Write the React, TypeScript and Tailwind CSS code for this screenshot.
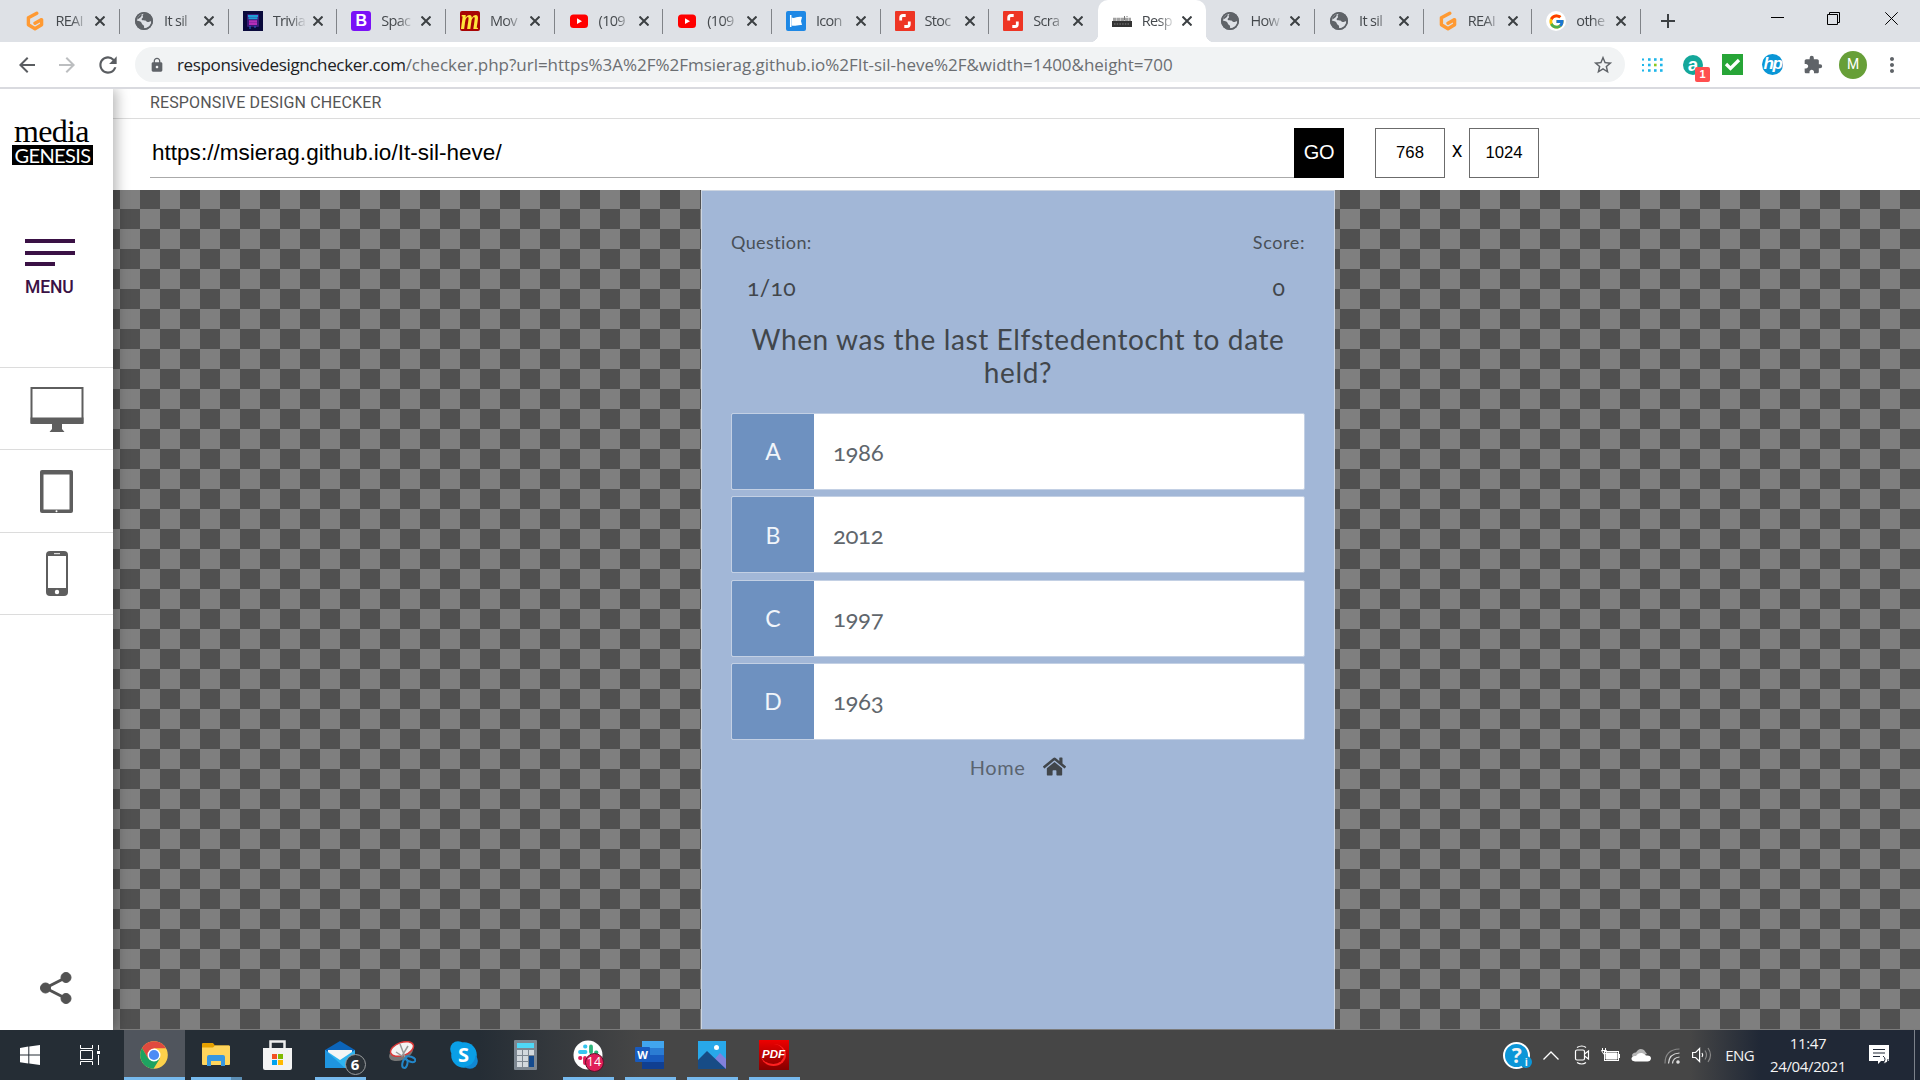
import React from "react";
import { FcGoogle } from "react-icons/fc";
import { FaHome } from "react-icons/fa";
import { MdLock, MdStarBorder, MdExtension, MdMoreVert, MdArrowBack, MdArrowForward, MdRefresh } from "react-icons/md";

const Gitpod = () => (
  <svg viewBox="0 0 20 20" className="h-5 w-5" fill="none" stroke="#ff9a33" strokeWidth="3.400" strokeLinejoin="round" strokeLinecap="round">
    <path d="M11.800 2.200 3.400 6.800v7l6.600 4 6.600-4V8.600L10 12.200" />
  </svg>
);
const Globe = () => (
  <svg viewBox="0 0 20 20" className="h-5 w-5">
    <circle cx="10" cy="10" r="9" fill="#5f6368" />
    <path d="M10.500 2.500c-2 .8-2.200 2-1.600 3 .8 1.300-1.500 1.400-1.200 3 .4 1.500 3.800.2 4.600 1.800.6 1.300 2.300.7 3.500.2 1-.4 1.700-.2 1.600.8-.6 3.400-3.400 5.900-6.600 6.200-1 0-.6-1.600-.8-2.500-.4-1.400-2-1-2.200-2.500-.1-1.400-2.200-2.600-5-3C2.700 5.500 6.200 2 10.500 2.500z" fill="#dee1e6" />
    <path d="M3 8.500C3.500 5.800 5.600 3.600 8.400 3c-1 1-.6 2.400-1.800 3.300C5.400 7 4.500 8.400 3 8.500z" fill="#5f6368" />
    <circle cx="10" cy="10" r="8.200" fill="none" stroke="#5f6368" strokeWidth="1.700" />
  </svg>
);
const Trivia = () => (
  <svg viewBox="0 0 20 20" className="h-5 w-5">
    <rect width="20" height="20" fill="#0a0a3c" />
    <rect x="4" y="3" width="12" height="13" rx="1" fill="#3a1a78" />
    <path d="M5 5h10M5.500 7.300h9" stroke="#1f9fd8" strokeWidth="2" />
    <path d="M6 10.300h8M6 12.800h8" stroke="#b52fb8" strokeWidth="2.300" />
    <path d="M7 15v3M12 15v2" stroke="#2b6fd0" />
  </svg>
);
const Bootstrap = () => (
  <div className="grid h-5 w-5 place-items-center rounded-[3px] bg-[#7a11f7] font-['Liberation_Sans'] text-[16px] leading-none font-bold text-white">B</div>
);
const Movie = () => (
  <div className="grid h-5 w-5 place-items-center rounded-[2px] bg-[#a80505] font-['Liberation_Serif'] font-bold text-[#ffe63b] italic">
    <span className="-mt-[5px] scale-y-125 text-[24px] leading-none">m</span>
  </div>
);
const YouTube = () => (
  <svg viewBox="0 0 20 20" className="h-5 w-5">
    <rect x="1" y="3.500" width="18" height="13.500" rx="3.500" fill="#f00" />
    <path d="M8 7.300v5.800l5-2.900z" fill="#fff" />
  </svg>
);
const IconFlag = () => (
  <svg viewBox="0 0 20 20" className="h-5 w-5">
    <rect width="20" height="20" rx="2" fill="#1e88e5" />
    <path d="M4.700 4v12" stroke="#fff" strokeWidth="1.500" />
    <path d="M5.500 6.500c3 1.500 5.500-1.500 10.500-.5l-1 4 1 4c-4.500-.5-7 1.700-10.500.5z" fill="#fff" />
  </svg>
);
const Shutterstock = () => (
  <svg viewBox="0 0 20 20" className="h-5 w-5">
    <rect width="20" height="20" rx="1" fill="#ee3524" />
    <path d="M5.700 9.500V6.800c0-1.600 1-2.300 2.300-2.300h2.700M14.300 10.500v2.700c0 1.600-1 2.300-2.300 2.300H9.300" fill="none" stroke="#fff" strokeWidth="2.800" />
  </svg>
);
const MediaTiny = () => (
  <svg viewBox="0 0 20 20" className="h-5 w-5">
    <path d="M1 8.500h18" stroke="#a2a2a2" strokeWidth="3.500" strokeDasharray="3.500 .4" />
    <path d="M12.500 5v4M15 5v1" stroke="#777" />
    <rect y="10" width="20" height="6" fill="#333" />
    <path d="M2 13h16" stroke="#5a5a5a" strokeWidth="2" strokeDasharray="1.500 1.200" />
  </svg>
);
const Google = () => (
  <div className="grid h-5 w-5 place-items-center rounded-full bg-white"><FcGoogle className="h-[17px] w-[17px]" /></div>
);

const tabs: { icon: React.FC; text: string; active?: boolean; line?: boolean }[] = [
  { icon: Gitpod, text: "REAI", line: true },
  { icon: Globe, text: "It sil", line: true },
  { icon: Trivia, text: "Trivia", line: true },
  { icon: Bootstrap, text: "Spac", line: true },
  { icon: Movie, text: "Mov", line: true },
  { icon: YouTube, text: "(109", line: true },
  { icon: YouTube, text: "(109", line: true },
  { icon: IconFlag, text: "Icon", line: true },
  { icon: Shutterstock, text: "Stoc", line: true },
  { icon: Shutterstock, text: "Scra" },
  { icon: MediaTiny, text: "Resp", active: true },
  { icon: Globe, text: "How", line: true },
  { icon: Globe, text: "It sil", line: true },
  { icon: Gitpod, text: "REAI", line: true },
  { icon: Google, text: "othe", line: true },
];

function TabStrip() {
  return (
    <div className="flex h-[42px] shrink-0 bg-[#dee1e6] pl-[11.4px]">
      {tabs.map((t, i) => {
        const Icon = t.icon;
        return (
          <div key={i} className={t.active ? "relative flex w-[108.65px] shrink-0 items-center rounded-t-[10px] bg-white pl-[14px]" : "relative flex w-[108.65px] shrink-0 items-center pl-[14px]"}>
            {t.active && (
              <>
                <span className="absolute bottom-0 -left-[8px] h-2 w-2 bg-[radial-gradient(circle_at_0_0,#dee1e6_8px,#fff_8.5px)]" />
                <span className="absolute -right-[8px] bottom-0 h-2 w-2 bg-[radial-gradient(circle_at_100%_0,#dee1e6_8px,#fff_8.5px)]" />
              </>
            )}
            <div className="grid h-[22px] w-5 place-items-center"><Icon /></div>
            <div className="ml-[10px] w-[32px] [mask-image:linear-gradient(90deg,#000_50%,rgba(0,0,0,0.15)_97%)] font-['Open_Sans',sans-serif] text-[14.5px] leading-5 tracking-[-0.7px] whitespace-nowrap text-[#45494d]">{t.text}</div>
            <svg viewBox="0 0 10 10" className="ml-[8px] h-[10px] w-[10px]" stroke="#3c4043" strokeWidth="2"><path d="M.5.5l9 9M9.500.5l-9 9" /></svg>
            {t.line && <span className="absolute top-[9px] right-0 h-[25px] w-px bg-[#808388]" />}
          </div>
        );
      })}
      <svg viewBox="0 0 14 14" className="mt-[14px] ml-[20px] h-[14px] w-[14px]" stroke="#3c4043" strokeWidth="2"><path d="M7 0v14M0 7h14" /></svg>
      <div className="mr-[22px] ml-auto flex items-start gap-[43px] pt-[12px]">
        <svg viewBox="0 0 13 13" className="h-[13px] w-[13px]" stroke="#000"><path d="M0 5.500h13" /></svg>
        <svg viewBox="0 0 13 13" className="h-[13px] w-[13px]" stroke="#000" fill="none"><path d="M.5 2.500h10v10H.5zM2.500 2.500v-2h10v10h-2" /></svg>
        <svg viewBox="0 0 13 13" className="ml-[2px] h-[13px] w-[13px]" stroke="#000"><path d="M.3.3l12.400 12.400M12.700.3.3 12.700" /></svg>
      </div>
    </div>
  );
}

const dotRows = [4.5, 10, 15.5];
function Toolbar() {
  return (
    <div className="flex h-[47px] shrink-0 items-center border-b-2 border-[#d9dadf] bg-white">
      <MdArrowBack className="ml-[15px] h-6 w-6 text-[#5a5d61]" />
      <MdArrowForward className="ml-[16px] h-6 w-6 text-[#bcbec0]" />
      <MdRefresh className="ml-[16px] h-[26px] w-[26px] text-[#5a5d61]" />
      <div className="ml-[14px] flex h-[35px] w-[1490px] items-center rounded-full bg-[#f1f3f4] pr-[11px] pl-[14px] font-['Open_Sans',sans-serif] text-[17px]">
        <MdLock className="h-4 w-4 text-[#5f6368]" />
        <div className="ml-[12px] whitespace-nowrap text-[#6b6e72]">
          <span className="tracking-[-0.36px] text-[#202124]">responsivedesignchecker.com</span>
          <span className="tracking-[-0.02px]">/checker.php?url=https%3A%2F%2Fmsierag.github.io%2FIt-sil-heve%2F&amp;width=1400&amp;height=700</span>
        </div>
        <MdStarBorder className="ml-auto h-[22px] w-[22px] text-[#5f6368]" />
      </div>
      <svg viewBox="0 0 21 20" className="ml-[17px] h-5 w-[21px]">
        {dotRows.map((y) => (
          <g key={y} fill="#1fb6ea">
            <rect x="0" y={y - 1} width="2" height="2" />
            <rect x="6" y={y - 1.3} width="2.600" height="2.600" />
            <rect x="12" y={y - 1.3} width="2.600" height="2.600" fill={y === 10 ? "#8bc81e" : "#1fb6ea"} />
            <rect x="18" y={y - 1.3} width="2.600" height="2.600" />
          </g>
        ))}
      </svg>
      <div className="relative ml-[20px] grid h-5 w-5 place-items-center rounded-full bg-[#14a79a] pb-1 font-['Liberation_Sans'] text-[19px] leading-none font-bold text-white">
        a
        <span className="absolute top-[12px] left-[12px] grid h-[15px] w-[15px] place-items-center rounded-[2px] bg-[#ff4f4f] text-[11px]">1</span>
      </div>
      <svg viewBox="0 0 21 21" className="ml-[19px] h-[21px] w-[21px]"><rect width="21" height="21" fill="#27a537" /><path d="M4 10l4.500 4.500L17 6" fill="none" stroke="#fff" strokeWidth="3.300" /></svg>
      <div className="ml-[19px] grid h-[21px] w-[21px] place-items-center rounded-full bg-[#0a96d6] pb-[2px] font-['Liberation_Sans'] text-[17px] leading-none font-bold tracking-[-1.5px] text-white italic">hp</div>
      <MdExtension className="ml-[20px] h-[20px] w-[20px] text-[#5f6368]" />
      <div className="ml-[16px] grid h-7 w-7 place-items-center rounded-full bg-[#679f38] font-['Roboto'] text-[14px] text-white">M</div>
      <MdMoreVert className="ml-[13px] h-6 w-6 text-[#5f6368]" />
    </div>
  );
}

function Sidebar() {
  return (
    <aside className="relative z-10 flex w-[113px] shrink-0 flex-col bg-white shadow-[4px_0_12px_rgba(0,0,0,0.28)] [clip-path:inset(0_-20px_0_0)]">
      <div className="flex h-[278px] flex-col">
        <div className="mt-[24px] ml-[12px] w-[81px] pl-[2px] font-['Liberation_Serif',serif] text-[32px] leading-[36px] tracking-[-0.7px] whitespace-nowrap text-black">media</div>
        <div className="-mt-[4px] ml-[12px] flex h-[20px] w-[81px] items-center justify-center bg-black font-['Lato',sans-serif] text-[20px] leading-none tracking-[-0.6px] text-white">GENESIS</div>
        <div className="mt-[74px] ml-[25px] flex flex-col gap-[7.5px]">
          <span className="h-[4px] w-[50px] bg-[#3a1145]" />
          <span className="h-[4px] w-[50px] bg-[#3a1145]" />
          <span className="h-[4px] w-[30px] bg-[#3a1145]" />
        </div>
        <div className="mt-[11px] ml-[25px] font-['Roboto',sans-serif] text-[17.500px] leading-[20px] font-medium tracking-[-0.15px] text-[#3a1145]">MENU</div>
      </div>
      <div className="grid h-[82px] place-items-center border-t border-[#dcdcdc] pt-[3px]">
        <svg viewBox="0 0 54 46" className="h-[46px] w-[54px]">
          <path d="M1.500 1h51v34h-51z" fill="#fff" stroke="#5e5e5e" strokeWidth="2" />
          <path d="M.5 30.500h53V37H.5zM22 37h10v5l2.500 3h-15l2.500-3z" fill="#5e5e5e" />
        </svg>
      </div>
      <div className="grid h-[83px] place-items-center border-t border-[#dcdcdc]">
        <svg viewBox="0 0 33 43" className="mt-px h-[43px] w-[33px]">
          <rect width="33" height="43" rx="2" fill="#5e5e5e" />
          <path d="M3.500 4.500h26v35h-26z" fill="#fff" />
          <circle cx="16.500" cy="41.200" r="1" fill="#fff" />
        </svg>
      </div>
      <div className="grid h-[82px] place-items-center border-t border-[#dcdcdc]">
        <svg viewBox="0 0 22 45" className="h-[45px] w-[22px]">
          <rect width="22" height="45" rx="4" fill="#5e5e5e" />
          <path d="M2 5h18v32H2z" fill="#fff" />
          <rect x="8" y="2" width="6" height="1.200" fill="#ddd" />
          <circle cx="11" cy="41" r="2.200" fill="#fff" />
        </svg>
      </div>
      <div className="flex flex-1 flex-col justify-end border-t border-[#dcdcdc] pb-[26px]">
        <svg viewBox="0 0 32 32" className="ml-[40px] h-8 w-8" fill="#525252" stroke="#525252">
          <path d="M26 5.500 5.500 16 26 26.500" fill="none" strokeWidth="3" />
          <circle cx="5.500" cy="16" r="5" /><circle cx="26" cy="5.500" r="5" /><circle cx="26" cy="26.500" r="5" />
        </svg>
      </div>
    </aside>
  );
}

const answers = [
  { key: "A", text: "1986" },
  { key: "B", text: "2012" },
  { key: "C", text: "1997" },
  { key: "D", text: "1963" },
];

function Quiz() {
  return (
    <div className="ml-[588px] flex w-[634px] flex-col border-x border-t border-[#cdd5e0] bg-[#a2b7d7] px-[30px] font-['Lato',sans-serif] text-[#495057] [font-feature-settings:'onum']">
      <div className="mt-[39px] -mr-px -ml-px flex justify-between text-[18px] leading-[24px]">
        <span className="tracking-[0.4px]">Question:</span>
        <span className="tracking-[0.6px]">Score:</span>
      </div>
      <div className="mt-[19px] flex justify-between pr-[19px] pl-[15px] text-[23px] leading-[28px] text-[#41464b]">
        <span className="tracking-[0.3px]">1/10</span>
        <span>0</span>
      </div>
      <h1 className="mt-[22px] text-center text-[28px] leading-[33px] tracking-[0.62px] text-[#41464b]">When was the last Elfstedentocht to date held?</h1>
      <div className="mt-[24px] -mr-px -ml-px flex flex-col gap-[6.300px]">
        {answers.map((a) => (
          <div key={a.key} className="flex h-[77px] overflow-hidden rounded-[2px] border border-[#c3d0e4] bg-white text-[24px]">
            <div className="grid w-[82px] place-items-center bg-[#6e91c0] text-[23px] text-[#f1f5fa]">{a.key}</div>
            <div className="flex flex-1 items-center pl-[19px] tracking-[-0.4px] text-[#60666c]">{a.text}</div>
          </div>
        ))}
      </div>
      <div className="mt-[13px] flex items-center justify-center gap-[18px] text-[20px] leading-[28px] text-[#5a6470]">
        <span className="tracking-[0.6px]">Home</span>
        <FaHome className="h-[23px] w-[23px] text-[#41464b]" />
      </div>
    </div>
  );
}

function Page() {
  return (
    <div className="flex min-h-0 flex-1 bg-white">
      <Sidebar />
      <main className="flex min-w-0 flex-1 flex-col">
        <div className="h-[30px] border-b border-[#dcdcdc] pl-[37px] font-['Roboto',sans-serif] text-[16px] leading-[27px] tracking-[0.13px] text-[#555]">RESPONSIVE DESIGN CHECKER</div>
        <div className="flex h-[71px] pt-[9px] pl-[37px] font-['Liberation_Sans',sans-serif] text-black">
          <div className="h-[50px] w-[1144px] border-b border-[#aaa] pl-[2px] text-[22.500px] leading-[49px] tracking-[0.02px]">https://msierag.github.io/It-sil-heve/</div>
          <button className="h-[50px] w-[50px] bg-black pb-[2px] text-[20px] tracking-[-0.3px] text-white">GO</button>
          <div className="ml-[31px] grid h-[50px] w-[70px] place-items-center border border-[#6b6b6b] text-[16.700px]">768</div>
          <div className="w-6 text-center font-['Roboto',sans-serif] text-[17px] leading-[47px]">X</div>
          <div className="grid h-[50px] w-[70px] place-items-center border border-[#6b6b6b] text-[16.700px]">1024</div>
        </div>
        <div className="flex flex-1 border-b border-[#7b7b7b] bg-[conic-gradient(#505050_25%,#7f7f7f_0_50%,#505050_0_75%,#7f7f7f_0)] bg-[length:40px_40px] bg-[position:7px_-1px]">
          <Quiz />
        </div>
      </main>
    </div>
  );
}

const Chrome = () => (
  <svg viewBox="0 0 28 28" className="h-7 w-7">
    <circle cx="14" cy="14" r="13.800" fill="#fdd14b" />
    <path d="M2 7.100A13.800 13.800 0 0 1 26 7.300H14L8 17.400z" fill="#e04a3f" />
    <path d="M2 7.100A13.800 13.800 0 0 0 13.500 27.800L20 17.300 8.200 17.400z" fill="#1ea261" />
    <circle cx="14" cy="14" r="6.500" fill="#fff" /><circle cx="14" cy="14" r="5.100" fill="#4c8bf5" />
  </svg>
);
const Explorer = () => (
  <svg viewBox="0 0 28 24" className="h-6 w-7">
    <path d="M0 1q0-1 1-1h10l2 2.500h14V6H0z" fill="#e6a100" />
    <path d="M0 4.500h11l2-2h14q1 0 1 1V21q0 1-1 1H1q-1 0-1-1z" fill="#ffd55c" />
    <path d="M5 23V14q0-2 2-2h14q2 0 2 2v9h-4v-5H9v5z" fill="#3797e0" />
  </svg>
);
const Store = () => (
  <svg viewBox="0 0 29 30" className="h-[30px] w-[29px]">
    <path d="M7.500 9V1.500h14V9" fill="none" stroke="#eee" strokeWidth="2.500" />
    <path d="M0 8h29v20q0 2-2 2H2q-2 0-2-2z" fill="#f3f3f3" />
    <path d="M9 14h5v5H9z" fill="#f25022" /><path d="M15 14h5v5h-5z" fill="#7fba00" /><path d="M9 20h5v5H9z" fill="#00a4ef" /><path d="M15 20h5v5h-5z" fill="#ffb900" />
  </svg>
);
const Mail = () => (
  <div className="relative h-7 w-[30px]">
    <svg viewBox="0 0 30 28" className="h-7 w-[30px]">
      <path d="M0 9 15 0l15 9v8H0z" fill="#0b64ba" /><path d="M3 9h24v10H3z" fill="#f5f5f5" />
      <path d="M0 9l15 10L30 9v18H0z" fill="#2fb4f0" /><path d="M0 9l20 18H0z" fill="#1f95e0" />
    </svg>
    <span className="absolute top-[13px] left-[20px] grid h-[21px] w-[21px] place-items-center rounded-full border border-[#9a9d9f] bg-[#2b3238] font-['Open_Sans'] text-[15px] leading-none font-bold text-white">6</span>
  </div>
);
const Snip = () => (
  <svg viewBox="0 0 28 28" className="h-7 w-7">
    <ellipse cx="13" cy="12" rx="12.500" ry="7" transform="rotate(-22 13 12)" fill="#777" />
    <ellipse cx="14" cy="8" rx="12" ry="6.500" transform="rotate(-20 14 8)" fill="#f4f4f4" stroke="#d93838" strokeWidth="1.500" />
    <path d="M12 3l5 13M20 5l-6 10-6-4" fill="none" stroke="#999" strokeWidth="1.500" />
    <ellipse cx="22.500" cy="18" rx="5" ry="2.500" transform="rotate(18 22 18)" fill="none" stroke="#2286c9" strokeWidth="2" />
    <ellipse cx="17" cy="22.500" rx="2.500" ry="4.500" transform="rotate(12 17 22)" fill="none" stroke="#2286c9" strokeWidth="2" />
  </svg>
);
const Skype = () => (
  <div className="relative grid h-7 w-7 place-items-center">
    <svg viewBox="0 0 28 28" className="absolute inset-0 h-7 w-7" fill="#0a9fe6"><circle cx="14" cy="14" r="12.800" /><circle cx="8" cy="8" r="7.800" /><circle cx="20" cy="20" r="7.800" fill="#1187d3" /><circle cx="14" cy="14" r="11.500" /></svg>
    <span className="relative font-['Open_Sans'] text-[20px] leading-none font-bold text-white">S</span>
  </div>
);
const Calc = () => (
  <svg viewBox="0 0 23 30" className="h-[30px] w-[23px]">
    <rect width="23" height="30" rx="1" fill="#7d8791" /><path d="M3 3h17v5H3z" fill="#4fd8f7" />
    <path d="M3 10h5v5H3zM9 10h5v5H9zM15 10h5v5h-5zM3 16h5v5H3zM9 16h5v5H9zM3 22h5v5H3zM9 22h5v5H9z" fill="#d3d9de" /><path d="M15 16h5v11h-5z" fill="#134a8e" />
  </svg>
);
const Slack = () => (
  <div className="relative h-[30px] w-[30px]">
    <svg viewBox="0 0 30 30" className="h-[30px] w-[30px]" strokeWidth="3.800" strokeLinecap="round">
      <circle cx="15" cy="15" r="14.500" fill="#fff" />
      <path d="M12 6.500h.5M7 12h5.500" stroke="#36c5f0" /><path d="M18 6.500V12M23 12.500h.5" stroke="#2eb67d" /><path d="M12 18v5M7 18h.5" stroke="#e01e5a" /><path d="M18 18h5" stroke="#ecb22e" />
    </svg>
    <span className="absolute top-[13px] left-[12px] grid h-[19px] w-[19px] place-items-center rounded-full border border-[#5d1028] bg-[#e01e5a] font-['Open_Sans'] text-[12.500px] leading-none text-white">14</span>
  </div>
);
const Word = () => (
  <div className="relative h-7 w-[29px]">
    <svg viewBox="0 0 29 28" className="h-7 w-[29px]">
      <path d="M7 0h22v7H7z" fill="#41a5ee" /><path d="M7 7h22v7H7z" fill="#2b7cd3" /><path d="M7 14h22v7H7z" fill="#185abd" /><path d="M7 21h22v7H7z" fill="#103f91" />
      <rect y="6" width="15" height="15" rx="1" fill="#185abd" />
    </svg>
    <span className="absolute top-[6px] left-0 w-[15px] text-center font-['Open_Sans'] text-[11px] leading-[15px] font-bold text-white">W</span>
  </div>
);
const Photos = () => (
  <svg viewBox="0 0 28 28" className="h-7 w-7">
    <rect width="28" height="28" fill="#28a8ea" /><path d="M15 20l7-8 6 6v10H15z" fill="#8180dc" /><path d="M0 19l9-9 19 18H0z" fill="#174c86" /><circle cx="18.500" cy="6.500" r="2.500" fill="#fff" />
  </svg>
);
const Pdf = () => (
  <div className="relative grid h-[30px] w-[30px] place-items-center bg-gradient-to-b from-[#ee0000] to-[#860000] font-['Liberation_Sans'] text-[11.500px] leading-none font-bold text-white italic">
    <span className="absolute top-[4px] left-[2px] h-[22px] w-[25px] rounded-[50%] border-r-2 border-b-2 border-[#ff2020]" />
    <span className="relative">PDF</span>
  </div>
);

const apps: { icon: React.FC; open?: boolean; active?: boolean; multi?: boolean }[] = [
  { icon: Chrome, active: true },
  { icon: Explorer, multi: true },
  { icon: Store },
  { icon: Mail, open: true },
  { icon: Snip },
  { icon: Skype },
  { icon: Calc },
  { icon: Slack, open: true },
  { icon: Word, open: true },
  { icon: Photos, open: true },
  { icon: Pdf, open: true },
];

function Taskbar() {
  return (
    <div className="flex h-[50px] shrink-0 bg-[linear-gradient(90deg,#252d35_0,#252d35_480px,#464646_640px,#464646_1690px,#202836_1760px,#202836_100%)] font-['Open_Sans',sans-serif] text-[#f4f4f4]">
      <svg viewBox="0 0 20 20" className="mt-[15px] ml-[20px] h-5 w-5" fill="#fff"><path d="M0 2.900 8.300 1.600v8H0zM9.300 1.500 20 0v9.600H9.300zM0 10.500h8.300v8L0 17.300zM9.300 10.500H20V20L9.300 18.600z" /></svg>
      <svg viewBox="0 0 20 20" className="mt-[15px] ml-[40px] h-5 w-5" stroke="#fff" fill="none"><path d="M.5 0v3.500h12V0M.5 5.500h12v9H.5zM.5 20v-3.500h12V20M18.500 0v5M18.500 10v10" /><path d="M17 6h3v3h-3z" fill="#fff" stroke="none" /></svg>
      <div className="ml-[24px] flex gap-px">
        {apps.map((a, i) => {
          const Icon = a.icon;
          return (
            <div key={i} className={a.active ? "flex h-full w-[61px] flex-col items-center bg-[#50555d]" : "flex h-full w-[61px] flex-col items-center"}>
              <div className="grid h-[47px] place-items-center pt-[3px] pr-[2px]"><Icon /></div>
              {a.active && <span className="h-[3px] w-[61px] bg-[#76b9ed]" />}
              {a.open && <span className="h-[3px] w-[51px] bg-[#76b9ed]" />}
              {a.multi && <span className="h-[3px] w-[51px] bg-[linear-gradient(90deg,#76b9ed_40px,#5b8db3_40px)]" />}
            </div>
          );
        })}
      </div>
      <div className="ml-auto flex items-center">
        <div className="relative mr-[-1px] grid h-[27px] w-[27px] place-items-center rounded-full border-2 border-white bg-[#0c96d8] text-[21px] leading-none font-bold">
          ?
          <span className="absolute top-[12px] left-[15px] grid h-3 w-3 place-items-center rounded-full bg-[#0c96d8] text-[10px] leading-none">i</span>
        </div>
        <svg viewBox="0 0 16 9" className="ml-[14px] h-[9px] w-4" fill="none" stroke="#fff" strokeWidth="1.300"><path d="M.5 8.500 8 1l7.500 7.500" /></svg>
        <svg viewBox="0 0 16 20" className="ml-[15px] h-5 w-4" fill="none" stroke="#fff" strokeWidth="1.200"><rect x="1.500" y="5" width="9" height="10" rx="1.500" /><path d="M10.500 9l4-3v8l-4-3M3 2.500q5-3 9 0M3 17.500q5 3 9 0" /></svg>
        <svg viewBox="0 0 20 14" className="ml-[11px] h-[14px] w-5" fill="none" stroke="#fff"><rect x="3.500" y="3.500" width="14" height="9" /><path d="M5 5h11v6H5z" fill="#fff" /><path d="M18.500 6v4M1.500 0v2M4.500 0v2M.5 2.500h5v2l-2.500 2z" /></svg>
        <svg viewBox="0 0 20 14" className="ml-[10px] h-[14px] w-5"><path d="M4 10q-4-1-2.500-4Q3 4 5 4.500 8-1 13 2l3 4z" fill="#b5b5b5" /><path d="M4 13.500q-4-.5-3.500-3.500Q1.500 7.500 5 8q2-3.500 6-3 2.500.5 4 2.500 5-.5 5 3-.5 3-3.500 3z" fill="#fff" /></svg>
        <svg viewBox="0 0 16 16" className="mt-px ml-[13px] h-4 w-4" fill="none" stroke="#d8d8d8" strokeWidth="1.200"><path d="M1 15.500Q1 1.500 15.500 1" stroke="#888" /><path d="M4.500 15.500Q5 5.500 15.500 5" /><path d="M8.500 15.500Q9 9.500 15.500 9" /><circle cx="14" cy="14" r="1.200" fill="#fff" /></svg>
        <svg viewBox="0 0 20 18" className="ml-[12px] h-[18px] w-5" fill="none" stroke="#fff" strokeWidth="1.200"><path d="M.6 6.500h3l4-4v13l-4-4h-3z" /><path d="M10 7q1.500 2 0 4" /><path d="M13 4.500q3 4.500 0 9M16 2q5 7 0 14" stroke="#888" /></svg>
        <span className="ml-[13px] text-[15px] tracking-[-0.6px]">ENG</span>
        <div className="ml-[15px] w-[78px] text-center text-[15px] leading-[23px] tracking-[-0.350px]">
          <div>11:47</div>
          <div>24/04/2021</div>
        </div>
        <svg viewBox="0 0 20 20" className="ml-[22px] h-5 w-5"><path d="M0 0h20v16h-8l-3 3v-3H0z" fill="#fff" /><path d="M4 4.500h12M4 8h12M4 11.500h7" stroke="#202836" strokeWidth="1.200" /><path d="M14 11q4 3 0 7 5 1 5-4" fill="#fff" stroke="#202836" /></svg>
        <div className="mr-[5px] ml-[25px] h-[50px] w-px bg-[#7c828b]" />
      </div>
    </div>
  );
}

export default function App() {
  return (
    <div className="flex h-[1080px] w-[1920px] flex-col overflow-hidden bg-white">
      <TabStrip />
      <Toolbar />
      <Page />
      <Taskbar />
    </div>
  );
}
